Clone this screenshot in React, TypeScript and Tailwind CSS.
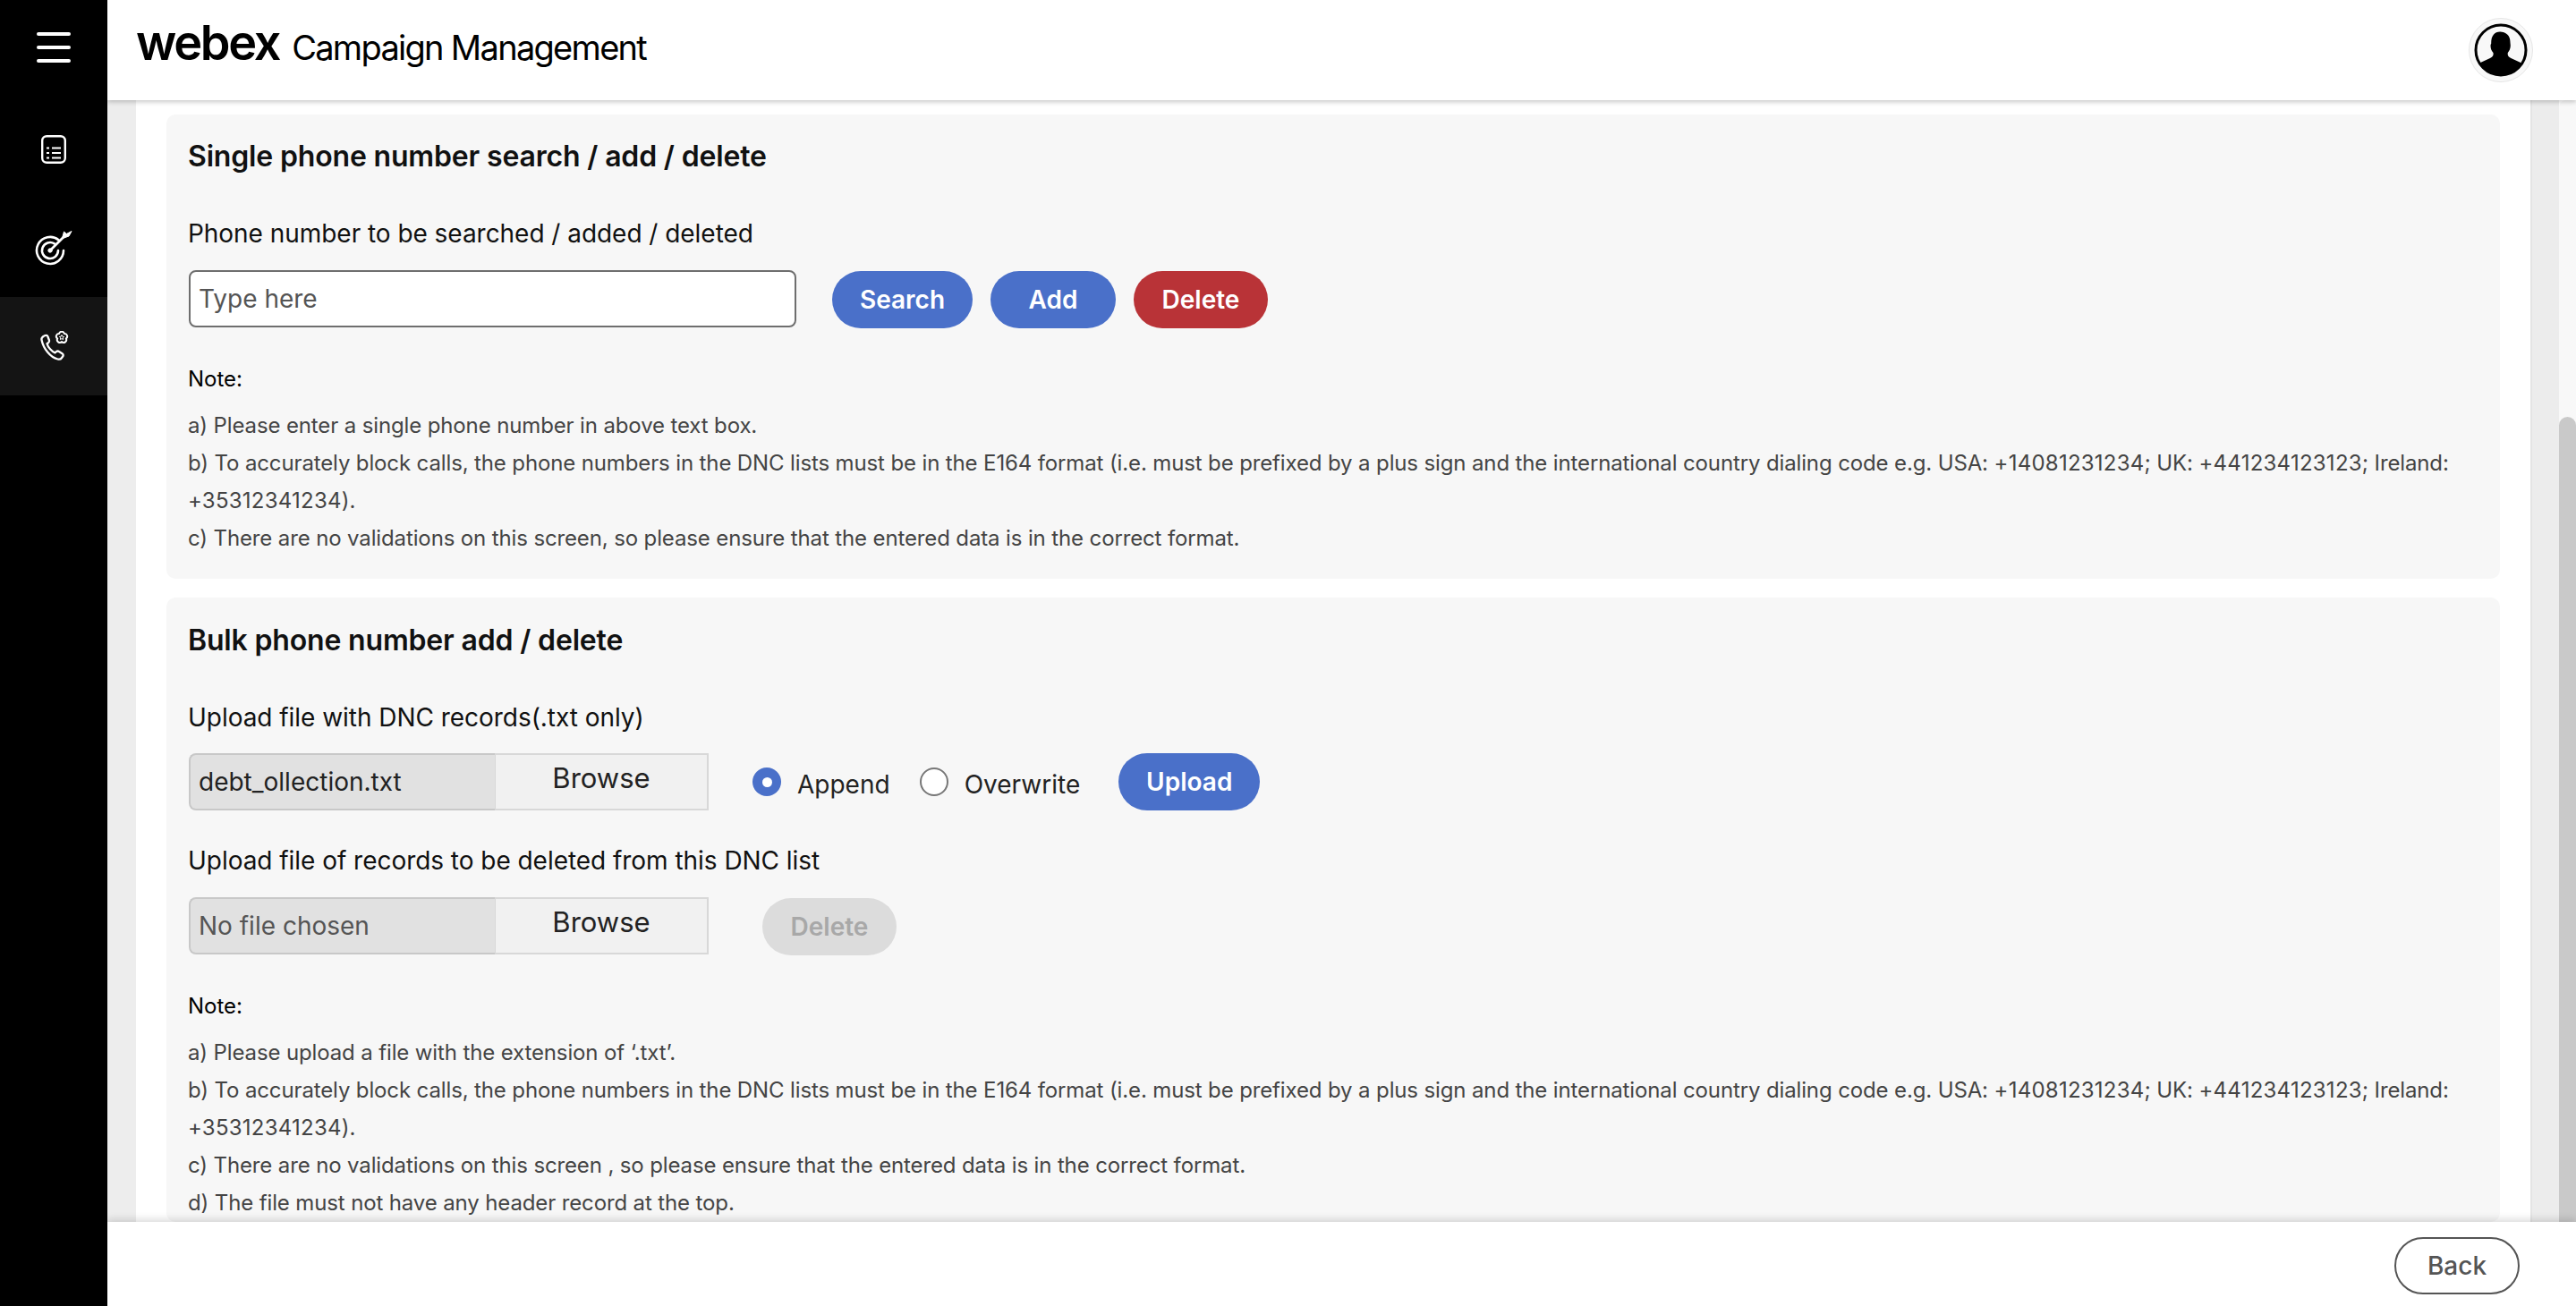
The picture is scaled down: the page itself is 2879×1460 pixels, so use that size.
import React from 'react';

const font = { fontFamily: 'Inter, "Liberation Sans", sans-serif' };

const DocIcon = () => (
  <svg width="30" height="34" viewBox="0 0 30 34" fill="none" stroke="white">
    <rect x="2.200" y="2.200" width="25.600" height="29.600" rx="5" strokeWidth="2.400" />
    <path d="M7 15.500h3M13 15.500h10M7 21h3M13 21h10M7 26.500h3M13 26.500h10" strokeWidth="2.200" />
  </svg>
);

const TargetIcon = () => (
  <svg width="42" height="42" viewBox="0 0 42 42" fill="none" stroke="white" strokeLinecap="round">
    <path d="M26.500 12.300A15 15 0 1 0 32 24" strokeWidth="2.600" />
    <path d="M21.800 16.400A9 9 0 1 0 26 24" strokeWidth="2.600" />
    <path d="M17 24L33 8" strokeWidth="2.800" />
    <circle cx="17" cy="24" r="2.200" fill="white" strokeWidth="1" />
    <path d="M31 8.500l1.500-5.500 2.800 2.500L41 2.500l-3 5.500-5.500 2z" fill="white" stroke="white" strokeWidth="1" />
  </svg>
);

const PhoneGearIcon = () => (
  <svg width="34" height="34" viewBox="0 0 34 34" fill="none" stroke="white" strokeLinejoin="round">
    <path
      d="M3.500 10C3 8 4 7 5.500 6L7.500 5C9 4.500 10 5 10.500 6.500L12 10.500C12.400 11.800 12 12.500 11 13.200L9.500 14.300C10.500 18 15 23 18.500 24.300L20 23C21 22.300 22 22.300 23 23L26.500 25.200C27.800 26 28 27.200 27.300 28.300L26 30C25 31.500 23.500 32 21.500 31.500C13 29.500 5.500 19.500 3.500 10Z"
      strokeWidth="2.300"
    />
    <path
      d="M23.100 3A3 3 0 0 1 28.900 3A3 3 0 0 1 30.800 8.500A3 3 0 0 1 26 12A3 3 0 0 1 21.200 8.500A3 3 0 0 1 23.100 3Z"
      strokeWidth="2"
    />
    <path d="M26 4.500l.8 1.700 1.800.2-1.300 1.300.3 1.800-1.600-.9-1.600.9.3-1.800-1.300-1.300 1.800-.2z" strokeWidth="1" />
  </svg>
);

const Avatar = () => (
  <div className="flex h-[72px] w-[72px] items-center justify-center rounded-full border border-[#e6e6e6] bg-[#f8f8f8]">
    <svg width="60" height="60" viewBox="0 0 60 60">
      <circle cx="30" cy="30" r="28" fill="#f8f8f8" stroke="black" strokeWidth="3" />
      <path
        d="M5 45l13-6c3-1.500 4-3.500 3.500-6-2-2-3-5-3-8 0-1 .3-1.800 .7-2.300C19 14 23 9.500 29 9.500c6.500 0 11.500 4 11.500 11.500 0 1 .3 2 .3 4 0 3-1.300 6-3 8-.5 2.500.5 4.500 3.500 6l13 6C49 53.500 40 58 30 58S11 53.500 5 45z"
        fill="black"
      />
    </svg>
  </div>
);

const Pill = ({ label, className }: { label: string; className: string }) => (
  <button className={`h-16 rounded-full text-[28px] font-semibold ${className}`}>{label}</button>
);

const FilePicker = ({ name, muted }: { name: string; muted?: boolean }) => (
  <div className="flex h-16 w-[581px] text-[28px]">
    <div
      className={`flex w-[342px] items-center rounded-l-lg border-y-2 border-l-2 border-[#c8c8c8] bg-[#e1e1e1] pl-[9px] ${
        muted ? 'text-[#555]' : 'text-[#222]'
      }`}
    >
      {name}
    </div>
    <div className="flex w-[239px] items-center justify-center border-2 border-l border-[#d8d8d8] bg-[#f1f1f1] pb-2 text-[31px] text-[#222]">
      Browse
    </div>
  </div>
);

const Radio = ({ label, checked }: { label: string; checked?: boolean }) => (
  <div className="flex items-center gap-[18px] text-[28px] text-[#222]">
    {checked ? (
      <span className="flex h-8 w-8 items-center justify-center rounded-full bg-[#4a70c9]">
        <span className="h-[11px] w-[11px] rounded-full bg-white" />
      </span>
    ) : (
      <span className="h-8 w-8 rounded-full border-2 border-[#777] bg-white" />
    )}
    <span className="pt-[6px]">{label}</span>
  </div>
);

const Num = ({ children }: { children: string }) => <span className="tracking-[0.25px]">{children}</span>;

const E164Line = () => (
  <>
    b) To accurately block calls, the phone numbers in the DNC lists must be in the E164 format (i.e. must be prefixed
    by a plus sign and the international country dialing code e.g. USA: <Num>+14081231234</Num>; UK:{' '}
    <Num>+441234123123</Num>; Ireland: <Num>+35312341234</Num>).
  </>
);

const Notes = ({ lines, className }: { lines: React.ReactNode[]; className: string }) => (
  <div className={`text-[24px] leading-[42px] tracking-[-0.13px] text-[#444] ${className}`}>
    {lines.map((line, i) => (
      <p key={i}>{line}</p>
    ))}
  </div>
);

const App = () => {
  return (
    <div className="flex h-[1460px] w-[2879px] overflow-hidden bg-white" style={font}>
      <aside className="w-[120px] shrink-0 bg-black">
        <div className="flex h-[112px] flex-col items-center justify-center gap-[11px] pb-[6px]">
          <span className="h-1 w-[38px] rounded-full bg-white" />
          <span className="h-1 w-[38px] rounded-full bg-white" />
          <span className="h-1 w-[38px] rounded-full bg-white" />
        </div>
        <div className="flex h-[110px] items-center justify-center">
          <DocIcon />
        </div>
        <div className="flex h-[110px] items-center justify-center">
          <TargetIcon />
        </div>
        <div className="flex h-[110px] items-center justify-center bg-[#141414]">
          <PhoneGearIcon />
        </div>
      </aside>

      <div className="flex min-w-0 flex-1 flex-col">
        <header className="relative z-10 flex h-[112px] shrink-0 items-center justify-between bg-white pl-[32px] pr-[48px] shadow-[0_2px_5px_rgba(0,0,0,0.22)]">
          <div className="flex items-baseline gap-[14px] pb-[18px] text-black">
            <span className="text-[54px] font-semibold tracking-[-2.3px]">webex</span>
            <span className="text-[38px] tracking-[-1.7px]">Campaign Management</span>
          </div>
          <Avatar />
        </header>

        <div className="flex min-h-0 flex-1">
          <div className="w-8 shrink-0 bg-[#ededed]" />
          <main className="min-w-0 flex-1 overflow-hidden bg-white px-[34px] pt-4">
            <section className="rounded-[10px] bg-[#f7f7f7] px-6 pb-6 pt-[27px]">
              <h2 className="text-[32px] font-[560] leading-10 tracking-[-0.17px] text-[#111]">
                Single phone number search / add / delete
              </h2>
              <div className="mt-[46px] text-[28px] leading-10 tracking-[-0.04px] text-[#111]">
                Phone number to be searched / added / deleted
              </div>
              <div className="ml-px mt-[21px] flex items-start">
                <div className="flex h-16 w-[679px] items-center rounded-lg border-2 border-[#6e6e6e] bg-white pl-[9px] text-[28px] text-[#555]">
                  Type here
                </div>
                <div className="ml-[40px] mt-px flex gap-5">
                  <Pill label="Search" className="w-[157px] bg-[#4a70c9] text-white" />
                  <Pill label="Add" className="w-[140px] bg-[#4a70c9] text-white" />
                  <Pill label="Delete" className="w-[150px] bg-[#b93337] text-white" />
                </div>
              </div>
              <div className="mt-[37px] text-[24px] leading-10 text-black">Note:</div>
              <Notes
                className="mt-[11px]"
                lines={[
                  'a) Please enter a single phone number in above text box.',
                  <E164Line />,
                  'c) There are no validations on this screen, so please ensure that the entered data is in the correct format.',
                ]}
              />
            </section>

            <section className="mt-[21px] rounded-[10px] bg-[#f7f7f7] px-6 pt-7">
              <h2 className="text-[32px] font-[560] leading-10 tracking-[-0.17px] text-[#111]">
                Bulk phone number add / delete
              </h2>
              <div className="mt-[46px] text-[28px] leading-10 tracking-[-0.04px] text-[#111]">
                Upload file with DNC records(.txt only)
              </div>
              <div className="ml-px mt-5 flex items-center">
                <FilePicker name="debt_ollection.txt" />
                <div className="ml-[49px] flex gap-[33px]">
                  <Radio label="Append" checked />
                  <Radio label="Overwrite" />
                </div>
                <Pill label="Upload" className="ml-[43px] w-[158px] bg-[#4a70c9] text-white" />
              </div>
              <div className="mt-9 text-[28px] leading-10 tracking-[-0.04px] text-[#111]">
                Upload file of records to be deleted from this DNC list
              </div>
              <div className="ml-px mt-[21px] flex items-start">
                <FilePicker name="No file chosen" muted />
                <div className="ml-[60px] mt-px">
                  <Pill label="Delete" className="w-[150px] bg-[#dcdcdc] text-[#a8a8a8]" />
                </div>
              </div>
              <div className="mt-[37px] text-[24px] leading-10 text-black">Note:</div>
              <Notes
                className="mt-[11px]"
                lines={[
                  'a) Please upload a file with the extension of ‘.txt’.',
                  <E164Line />,
                  'c) There are no validations on this screen , so please ensure that the entered data is in the correct format.',
                  'd) The file must not have any header record at the top.',
                ]}
              />
            </section>
          </main>
          <div className="w-8 shrink-0 border-l-2 border-[#e4e4e4] bg-[#ececec]" />
          <div className="w-[19px] shrink-0 rounded-tl-lg bg-[#f8f8f8]">
            <div className="mt-[354px] h-full rounded-t-xl bg-[#c9c9c9]" />
          </div>
        </div>

        <footer className="relative z-10 flex h-[94px] shrink-0 items-center justify-end bg-white pr-[63px] shadow-[0_-3px_8px_rgba(0,0,0,0.14)]">
          <button className="mt-[3px] h-16 w-[140px] rounded-full border-2 border-[#555] text-[28px] font-medium text-[#555]">
            Back
          </button>
        </footer>
      </div>
    </div>
  );
};

export default App;
